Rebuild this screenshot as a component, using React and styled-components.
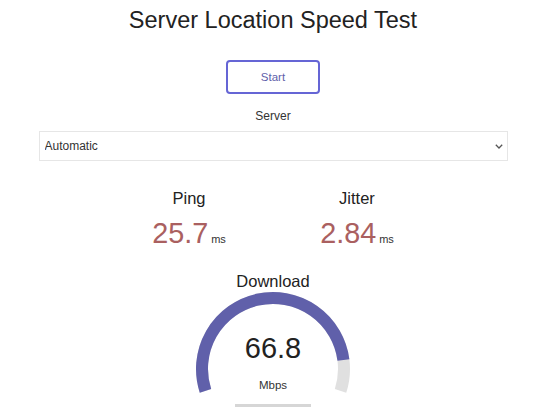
import React from "react";
import styled, { createGlobalStyle } from "styled-components";

const Global = createGlobalStyle`
  html, body { margin: 0; padding: 0; background: #fff; }
  body { font-family: "Liberation Sans", Arial, sans-serif; color: #222; }
`;

const Page = styled.div`
  width: 546px;
  display: flex;
  flex-direction: column;
  align-items: center;
  text-align: center;
`;

const Title = styled.h1`
  margin: 0;
  height: 41px;
  line-height: 41px;
  font-size: 23.5px;
  font-weight: normal;
  color: #222;
`;

const StartButton = styled.button`
  margin-top: 19px;
  width: 94px;
  height: 34px;
  box-sizing: border-box;
  border: 2px solid #6565d5;
  border-radius: 4px;
  background: #fff;
  color: #6060aa;
  font-family: inherit;
  font-size: 11.5px;
  cursor: pointer;
`;

const FieldLabel = styled.div`
  margin-top: 14px;
  height: 17px;
  line-height: 17px;
  font-size: 12px;
  color: #333;
`;

const SelectWrap = styled.div`
  position: relative;
  margin-top: 6px;
  width: 469px;
  height: 30px;
`;

const Select = styled.select`
  appearance: none;
  -webkit-appearance: none;
  width: 100%;
  height: 100%;
  box-sizing: border-box;
  border: 1px solid #e6e6e6;
  border-radius: 0;
  background: #fff;
  padding: 0 5px;
  font-family: inherit;
  font-size: 12px;
  color: #333;
  outline: none;
`;

const Chevron = styled.svg`
  position: absolute;
  right: 5px;
  top: 13px;
  pointer-events: none;
`;

const StatsRow = styled.div`
  margin-top: 26.5px;
  display: grid;
  grid-template-columns: 168px 168px;
`;

const Stat = styled.div`
  display: flex;
  flex-direction: column;
  align-items: center;
`;

const StatName = styled.div`
  height: 20px;
  line-height: 20px;
  font-size: 16.5px;
  color: #222;
`;

const StatValue = styled.div`
  margin-top: 8px;
  height: 34px;
  line-height: 34px;
  font-size: 28.8px;
  color: #aa6060;
`;

const Unit = styled.span`
  font-size: 11px;
  line-height: 11px;
  color: #333;
  margin-left: 3px;
`;

const GaugeName = styled(StatName)`
  margin-top: 22.5px;
  height: 19px;
  line-height: 19px;
`;

const GaugeBox = styled.div`
  display: grid;
  width: 190px;
  height: 113px;
  & > * { grid-area: 1 / 1; }
`;

const GaugeText = styled.div`
  display: flex;
  flex-direction: column;
  align-items: center;
  padding-top: 40px;
`;

const GaugeValue = styled.div`
  height: 34px;
  line-height: 34px;
  font-size: 29px;
  color: #222;
`;

const GaugeUnit = styled.div`
  margin-top: 12.5px;
  height: 14px;
  line-height: 14px;
  font-size: 11.5px;
  color: #333;
`;

const ProgressBar = styled.div`
  width: 76px;
  height: 3px;
  background: #d6d6d6;
`;

function arcPoint(cx, cy, r, deg) {
  const a = (deg * Math.PI) / 180;
  return [cx + r * Math.cos(a), cy + r * Math.sin(a)];
}

function arcPath(cx, cy, r, from, to) {
  const [x1, y1] = arcPoint(cx, cy, r, from);
  const [x2, y2] = arcPoint(cx, cy, r, to);
  const large = to - from > 180 ? 1 : 0;
  return `M ${x1} ${y1} A ${r} ${r} 0 ${large} 1 ${x2} ${y2}`;
}

function Gauge({ value }) {
  const amount = 1 - 1 / Math.pow(1.3, Math.sqrt(value));
  const start = 162;
  const sweep = 216;
  const cx = 95, cy = 78, r = 71;
  return (
    <GaugeBox>
      <svg width="190" height="113" viewBox="0 0 190 113">
        <path d={arcPath(cx, cy, r, start, start + sweep)} fill="none" stroke="#e0e0e0" strokeWidth="12" />
        <path d={arcPath(cx, cy, r, start, start + sweep * amount)} fill="none" stroke="#6060aa" strokeWidth="12" />
      </svg>
      <GaugeText>
        <GaugeValue>{value}</GaugeValue>
        <GaugeUnit>Mbps</GaugeUnit>
      </GaugeText>
    </GaugeBox>
  );
}

export default function App() {
  return (
    <>
      <Global />
      <Page>
        <Title>Server Location Speed Test</Title>
        <StartButton>Start</StartButton>
        <FieldLabel>Server</FieldLabel>
        <SelectWrap>
          <Select defaultValue="auto">
            <option value="auto">Automatic</option>
          </Select>
          <Chevron width="8" height="5" viewBox="0 0 8 5">
            <path d="M0.8 0.8 L4 4 L7.2 0.8" fill="none" stroke="#555" strokeWidth="1.3" />
          </Chevron>
        </SelectWrap>
        <StatsRow>
          <Stat>
            <StatName>Ping</StatName>
            <StatValue>25.7<Unit>ms</Unit></StatValue>
          </Stat>
          <Stat>
            <StatName>Jitter</StatName>
            <StatValue>2.84<Unit>ms</Unit></StatValue>
          </Stat>
        </StatsRow>
        <GaugeName>Download</GaugeName>
        <Gauge value={66.8} />
        <ProgressBar />
      </Page>
    </>
  );
}
